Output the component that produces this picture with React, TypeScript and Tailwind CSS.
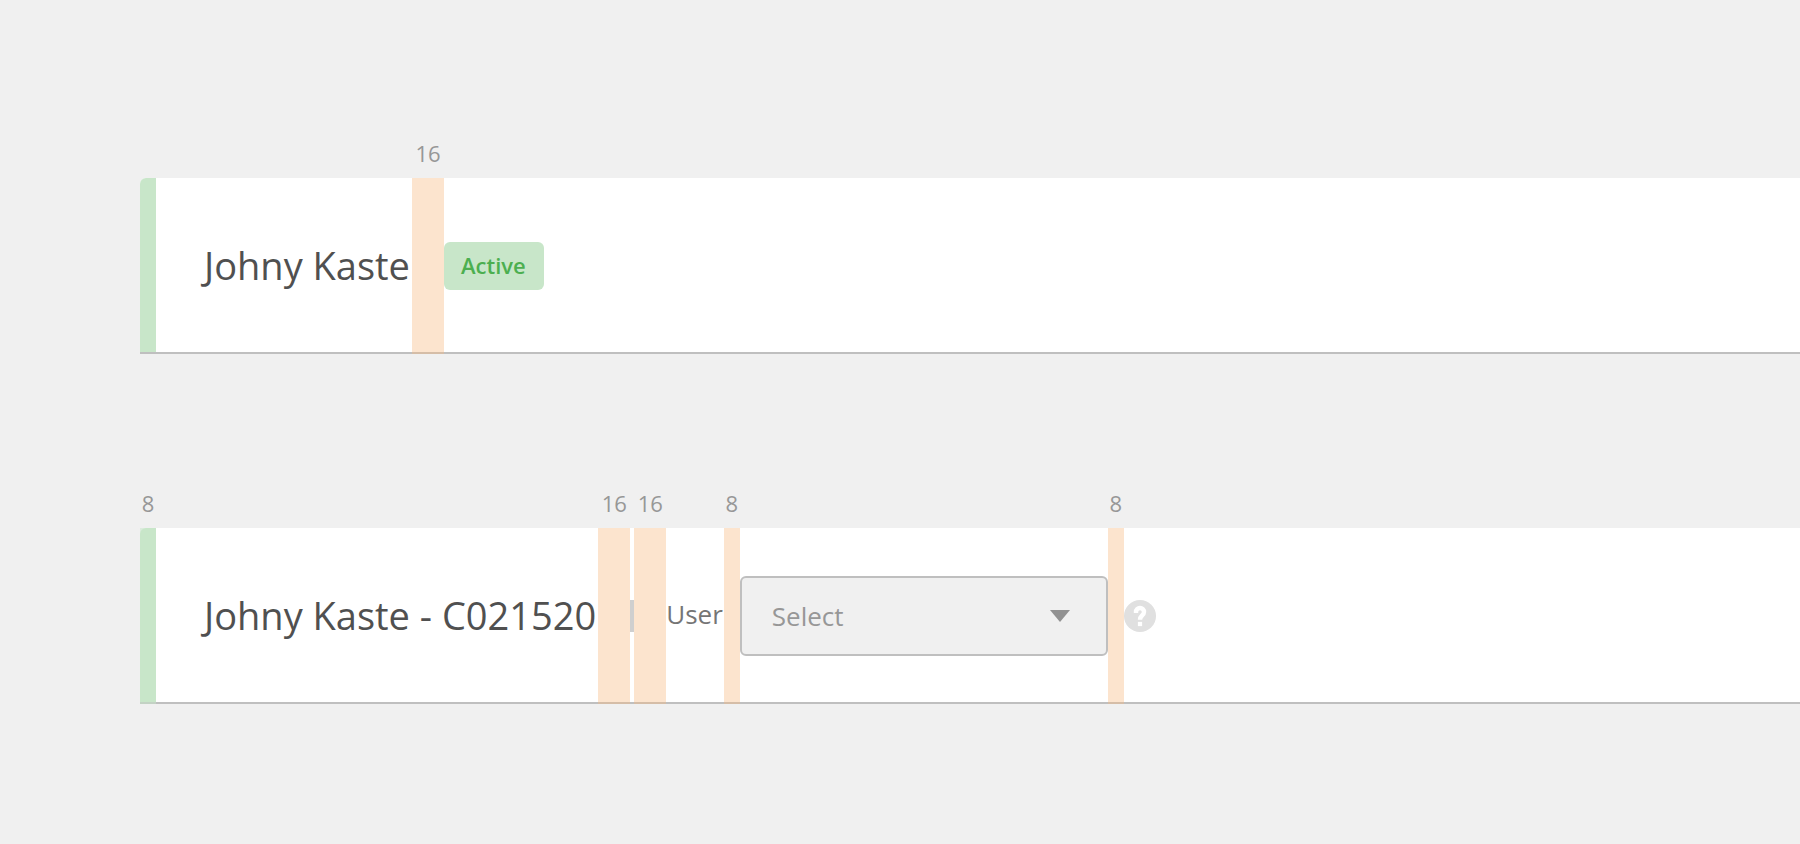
import type { ReactNode } from "react";

function Gap({ size }: { size: 8 | 16 }) {
  return (
    <div className={`relative shrink-0 self-stretch bg-[#f7bb85]/40 ${size === 16 ? "w-8" : "w-4"}`}>
      <GapLabel size={size} />
    </div>
  );
}

function GapLabel({ size }: { size: 8 | 16 }) {
  return (
    <span className="absolute bottom-full left-1/2 mb-[9px] -translate-x-1/2 text-[22px] leading-8 text-[#979797]">
      {size}
    </span>
  );
}

function Header({ name, measured = false, children }: { name: string; measured?: boolean; children: ReactNode }) {
  return (
    <header className="flex h-44 items-center rounded-tl-md bg-white shadow-[inset_0_-2px_0_#bfbfbf]">
      <div className="relative self-stretch pb-[2px]">
        <div className="h-full w-4 rounded-tl-md bg-[#c8e6c9]" />
        {measured && (
          <div className="absolute inset-0 bg-[#c8e6c9]/50">
            <GapLabel size={8} />
          </div>
        )}
      </div>
      <h1 className="pr-[2px] pb-[2px] pl-12 text-[38px] leading-[52px] whitespace-nowrap text-[#505050]">{name}</h1>
      {children}
    </header>
  );
}

export default function App() {
  return (
    <main className="flex min-h-screen flex-col gap-[174px] overflow-x-hidden bg-[#f0f0f0] pt-[178px] pb-[140px] pl-[140px] font-['Open_Sans',sans-serif]">
      <Header name="Johny Kaste">
        <Gap size={16} />
        <span className="rounded-md bg-[#c8e6c9] pt-px pr-[18px] pb-[3px] pl-[17px] text-[22px] leading-[44px] font-semibold text-[#4caf50]">
          Active
        </span>
      </Header>
      <Header name="Johny Kaste - C021520" measured>
        <Gap size={16} />
        <div className="h-8 w-1 bg-[#cfcfcf]" />
        <Gap size={16} />
        <label htmlFor="user" className="pr-px pb-1 text-[26px] leading-9 text-[#757575]">
          User
        </label>
        <Gap size={8} />
        <div className="relative">
          <select
            id="user"
            className="block h-20 w-[368px] appearance-none rounded-md border-2 border-[#bfbfbf] bg-[#f0f0f0] pr-16 pl-[30px] text-[26px] text-[#979797]"
          >
            <option>Select</option>
          </select>
          <svg viewBox="0 0 20 12" className="pointer-events-none absolute top-[34px] right-[38px] h-3 w-5" aria-hidden="true">
            <path d="M0 0h20L10 12z" fill="#919191" />
          </svg>
        </div>
        <Gap size={8} />
        <button type="button" aria-label="Help" className="size-8 shrink-0">
          <svg viewBox="0 0 32 32" className="size-8" aria-hidden="true">
            <circle cx="16" cy="16" r="16" fill="#e0e0e0" />
            <path d="M12 13v-1a4 4 0 0 1 8 0c0 3.6-4 3.4-4 7.8" fill="none" stroke="#fff" strokeWidth="4.4" />
            <path d="M13.9 21.9h4.2v4.2h-4.2z" fill="#fff" />
          </svg>
        </button>
      </Header>
    </main>
  );
}
